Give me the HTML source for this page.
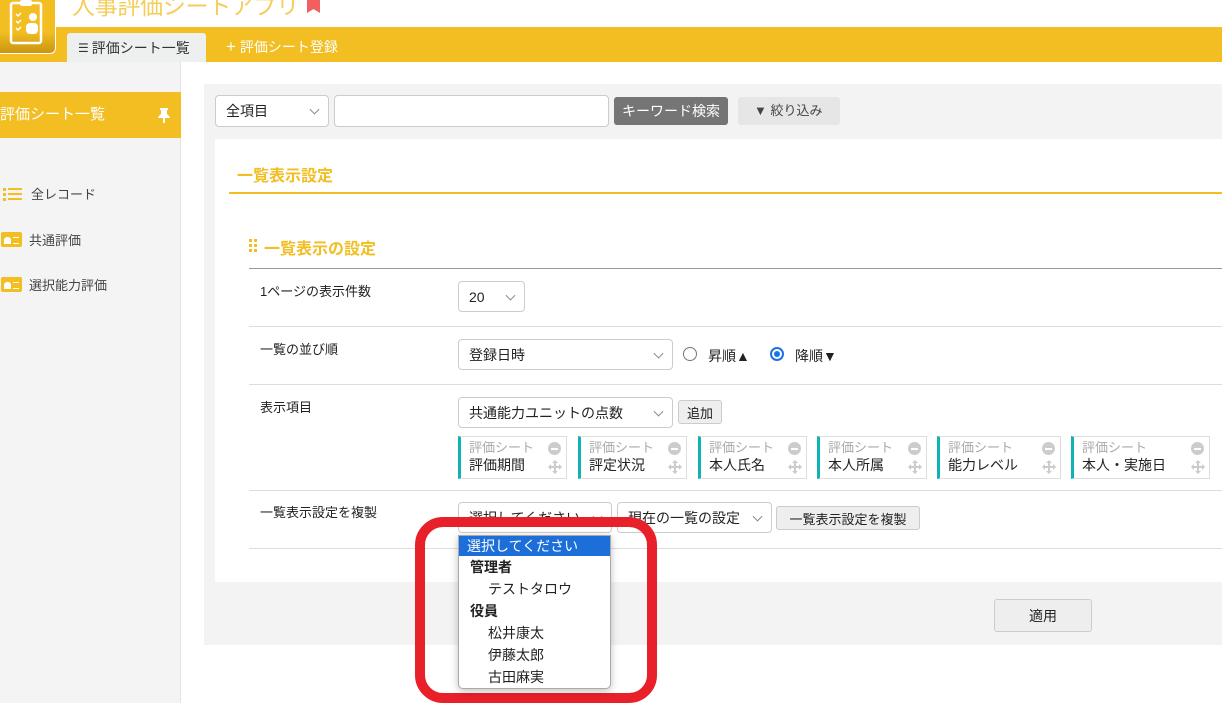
<!DOCTYPE html><html><head><meta charset="utf-8"><style>
*{box-sizing:border-box;margin:0;padding:0}
body{width:1222px;height:703px;overflow:hidden;background:#fff;font-family:"Liberation Sans","Noto Sans CJK JP",sans-serif;font-size:14px;color:#222;position:relative}
.a{position:absolute}
.sel{position:absolute;border:1px solid #ccc;border-radius:4px;background:#fff;padding-left:10px;font-size:14px;display:flex;align-items:center}
.sel:after{content:"";position:absolute;right:10px;top:50%;width:6px;height:6px;border-right:1px solid #888;border-bottom:1px solid #888;transform:translateY(-70%) rotate(45deg)}
.hl{position:absolute;left:249px;right:0;height:1px;background:#ddd}
.lbl{position:absolute;left:260px;font-size:13px}
.chip{position:absolute;top:436px;height:43px;border:1px solid #ddd;border-left:3px solid #0fb3b3;background:#fff;padding:2px 0 0 8px}
.chip .t{font-size:13px;color:#aaa;line-height:17px}
.chip .v{font-size:14px;color:#222;line-height:19px}
.chip .m{position:absolute;right:5px;top:5px;width:13px;height:13px;border-radius:50%;background:#ccc}
.chip .m:after{content:"";position:absolute;left:3px;top:6px;width:7px;height:1.5px;background:#fff}
.chip svg{position:absolute;right:4px;top:23px}
.btn{position:absolute;border:1px solid #ccc;border-radius:3px;background:#eee;font-size:13px;display:flex;align-items:center;justify-content:center}
.side{position:absolute;left:0;font-size:13px;color:#444;display:flex;align-items:center}
.ic{width:21px;height:15px;background:#f2be22;border-radius:2px;margin:0 7px 0 1px;position:relative}
.ic:before{content:"";position:absolute;left:3px;top:5px;width:7px;height:7px;background:#fff;border-radius:3px 3px 0 0}
.ic:after{content:"";position:absolute;left:12px;top:5px;width:6px;height:5px;border-top:1.5px solid #fff;border-bottom:1.5px solid #fff}
.dd div{height:22px;line-height:22px;font-size:14px}
</style></head><body>
<div class="a" style="left:0;top:27px;width:1222px;height:35px;background:#f2be22"></div>
<div class="a" style="left:0;top:0;width:56px;height:54px;background:linear-gradient(#f2be22 60%,#c9960f);border-radius:0 0 6px 0;border-right:1px solid #fff;border-bottom:1px solid #fff"></div>
<svg class="a" style="left:8px;top:0" width="40" height="46" viewBox="0 0 40 46"><rect x="3" y="3" width="30" height="40" rx="2" fill="none" stroke="#fff" stroke-width="2.5"/><rect x="12" y="0" width="12" height="6" rx="2" fill="#fff"/><path d="M8 14l2 2 3-3M8 21l2 2 3-3M8 28l2 2 3-3" stroke="#fff" stroke-width="1.5" fill="none"/><circle cx="25" cy="17" r="4" fill="#fff"/><rect x="18" y="23" width="12" height="11" rx="4" fill="#fff"/></svg>
<div class="a" style="left:72px;top:-13px;font-size:23px;color:#f5cd5a;letter-spacing:-0.3px">人事評価シートアプリ</div>
<div class="a" style="left:307px;top:0;width:13px;height:13px;background:#f06060;clip-path:polygon(0 0,100% 0,100% 100%,50% 70%,0 100%)"></div>
<div class="a" style="left:67px;top:33px;width:139px;height:29px;background:#eef0f0;border-radius:3px 3px 0 0;font-size:14px;display:flex;align-items:center;padding-left:11px;color:#333"><span style="font-size:12px;margin-right:3px">☰</span>評価シート一覧</div>
<div class="a" style="left:226px;top:37px;font-size:14px;color:#fff"><span style="font-size:17px;line-height:14px">+</span> 評価シート登録</div>
<div class="a" style="left:0;top:62px;width:181px;height:641px;background:#f4f4f4;border-right:1px solid #e4e4e4"></div>
<div class="a" style="left:0;top:92px;width:181px;height:46px;background:#f2be22;color:#fff;font-size:15px;line-height:46px">評価シート一覧
<svg class="a" style="left:158px;top:16px" width="12" height="15" viewBox="0 0 12 15"><path d="M2 0h8v2H9v4l3 3v1H0V9l3-3V2H2z M5 10h2v5H5z" fill="#fff"/></svg></div>
<div class="side" style="top:184px"><svg width="20" height="14" style="margin:0 8px 0 3px"><path d="M0 1h3v3H0zM0 6h3v3H0zM0 11h3v3H0zM5 1h14v2H5zM5 6h14v2H5zM5 11h14v2H5z" fill="#f2be22"/></svg>全レコード</div>
<div class="side" style="top:230px"><span class="ic"></span>共通評価</div>
<div class="side" style="top:275px"><span class="ic"></span>選択能力評価</div>
<div class="a" style="left:204px;top:84px;width:1018px;height:561px;background:#f3f3f3"></div>
<div class="sel" style="left:215px;top:95px;width:114px;height:32px">全項目</div>
<div class="a" style="left:334px;top:95px;width:275px;height:32px;border:1px solid #ccc;border-radius:4px;background:#fff"></div>
<div class="a" style="left:614px;top:97px;width:114px;height:28px;background:#757575;border-radius:3px;color:#fff;font-size:14px;line-height:28px;text-align:center">キーワード検索</div>
<div class="a" style="left:738px;top:97px;width:102px;height:28px;background:#e6e6e6;border-radius:3px;font-size:13px;line-height:28px;color:#444;padding-left:16px">▼ 絞り込み</div>
<div class="a" style="left:215px;top:139px;width:1007px;height:443px;background:#fff"></div>
<div class="a" style="left:237px;top:162px;font-size:16px;font-weight:bold;color:#f2be22">一覧表示設定</div>
<div class="a" style="left:229px;top:192px;width:993px;height:2px;background:#f2be22"></div>
<svg class="a" style="left:249px;top:239px" width="9" height="14"><path d="M0 0h3v3H0zM5 0h3v3H5zM0 5h3v3H0zM5 5h3v3H5zM0 10h3v3H0zM5 10h3v3H5z" fill="#f2be22"/></svg>
<div class="a" style="left:264px;top:235px;font-size:16px;font-weight:bold;color:#f2be22">一覧表示の設定</div>
<div class="hl" style="top:268px;background:#999"></div>
<div class="lbl" style="top:281px">1ページの表示件数</div>
<div class="sel" style="left:458px;top:281px;width:67px;height:31px">20</div>
<div class="hl" style="top:326px"></div>
<div class="lbl" style="top:339px">一覧の並び順</div>
<div class="sel" style="left:458px;top:339px;width:215px;height:31px">登録日時</div>
<div class="a" style="left:683px;top:347px;width:14px;height:14px;border:1px solid #777;border-radius:50%"></div>
<div class="a" style="left:708px;top:346px;font-size:14px">昇順▲</div>
<div class="a" style="left:770px;top:347px;width:14px;height:14px;border:2px solid #1a73e8;border-radius:50%;padding:2px"><div style="width:6px;height:6px;border-radius:50%;background:#1a73e8"></div></div>
<div class="a" style="left:795px;top:346px;font-size:14px">降順▼</div>
<div class="hl" style="top:384px"></div>
<div class="lbl" style="top:397px">表示項目</div>
<div class="sel" style="left:458px;top:397px;width:215px;height:31px">共通能力ユニットの点数</div>
<div class="btn" style="left:678px;top:400px;width:44px;height:24px">追加</div>
<div class="chip" style="left:458px;width:109px"><div class="t">評価シート</div><div class="v">評価期間</div><i class="m"></i><svg width="14" height="14"><path d="M7 0l3 3H8v3h3V4l3 3-3 3V8H8v3h2l-3 3-3-3h2V8H3v2L0 7l3-3v2h3V3H4z" fill="#ccc"/></svg></div>
<div class="chip" style="left:578px;width:109px"><div class="t">評価シート</div><div class="v">評定状況</div><i class="m"></i><svg width="14" height="14"><path d="M7 0l3 3H8v3h3V4l3 3-3 3V8H8v3h2l-3 3-3-3h2V8H3v2L0 7l3-3v2h3V3H4z" fill="#ccc"/></svg></div>
<div class="chip" style="left:698px;width:109px"><div class="t">評価シート</div><div class="v">本人氏名</div><i class="m"></i><svg width="14" height="14"><path d="M7 0l3 3H8v3h3V4l3 3-3 3V8H8v3h2l-3 3-3-3h2V8H3v2L0 7l3-3v2h3V3H4z" fill="#ccc"/></svg></div>
<div class="chip" style="left:817px;width:110px"><div class="t">評価シート</div><div class="v">本人所属</div><i class="m"></i><svg width="14" height="14"><path d="M7 0l3 3H8v3h3V4l3 3-3 3V8H8v3h2l-3 3-3-3h2V8H3v2L0 7l3-3v2h3V3H4z" fill="#ccc"/></svg></div>
<div class="chip" style="left:937px;width:124px"><div class="t">評価シート</div><div class="v">能力レベル</div><i class="m"></i><svg width="14" height="14"><path d="M7 0l3 3H8v3h3V4l3 3-3 3V8H8v3h2l-3 3-3-3h2V8H3v2L0 7l3-3v2h3V3H4z" fill="#ccc"/></svg></div>
<div class="chip" style="left:1071px;width:139px"><div class="t">評価シート</div><div class="v">本人・実施日</div><i class="m"></i><svg width="14" height="14"><path d="M7 0l3 3H8v3h3V4l3 3-3 3V8H8v3h2l-3 3-3-3h2V8H3v2L0 7l3-3v2h3V3H4z" fill="#ccc"/></svg></div>
<div class="hl" style="top:490px"></div>
<div class="lbl" style="top:502px">一覧表示設定を複製</div>
<div class="sel" style="left:458px;top:502px;width:154px;height:31px">選択してください</div>
<div class="sel" style="left:617px;top:502px;width:155px;height:31px">現在の一覧の設定</div>
<div class="btn" style="left:776px;top:506px;width:144px;height:24px">一覧表示設定を複製</div>
<div class="hl" style="top:548px"></div>
<div class="btn" style="left:994px;top:599px;width:98px;height:33px;font-size:14px">適用</div>
<div class="a" style="left:415px;top:517px;width:242px;height:186px;border:10px solid #e8202a;border-radius:28px"></div>
<div class="a dd" style="left:458px;top:535px;width:153px;height:154px;background:#fff;border:1px solid #aaa;border-radius:0 0 5px 5px;box-shadow:0 2px 8px rgba(0,0,0,.25);overflow:hidden">
<div style="background:#1c6ed8;color:#fff;padding-left:8px;height:20px;line-height:20px">選択してください</div>
<div style="font-weight:bold;padding-left:11px">管理者</div>
<div style="padding-left:29px">テストタロウ</div>
<div style="font-weight:bold;padding-left:11px">役員</div>
<div style="padding-left:29px">松井康太</div>
<div style="padding-left:29px">伊藤太郎</div>
<div style="padding-left:29px">古田麻実</div>
</div>
</body></html>
